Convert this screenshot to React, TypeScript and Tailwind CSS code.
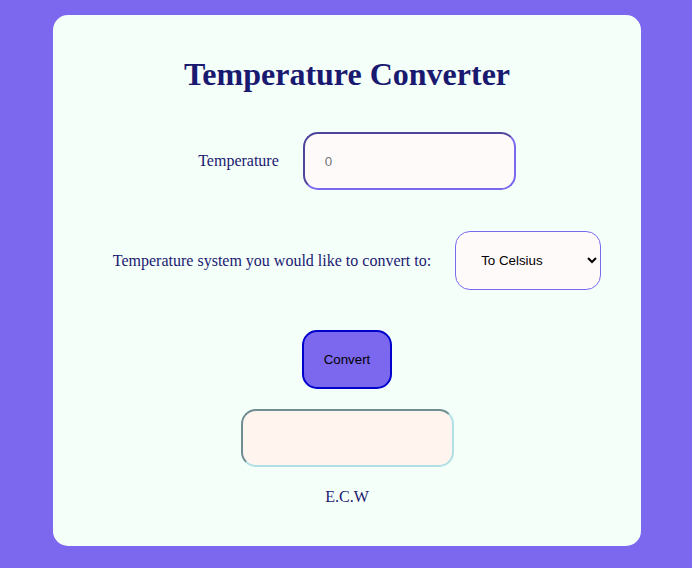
import React from "react";

export default function App() {
  return (
    <div className="min-h-[568px] w-full bg-[#7B68EE] pt-[15px] pb-[22px]">
      <div className="ml-[53px] flex h-[531px] w-[588px] flex-col items-center rounded-[15px] bg-[#F5FFFA] pt-[41px] text-[#191970] [font-family:'Liberation_Serif',serif]">
        <h1 className="text-[32px] font-bold leading-[37px]">Temperature Converter</h1>

        <div className="mt-[39px] flex items-center gap-[24px] pl-[20px]">
          <label className="text-[16px] leading-[18px]">Temperature</label>
          <input
            type="text"
            placeholder="0"
            className="h-[58px] w-[213px] rounded-[15px] border-2 border-[#7B68EE] [border-style:inset] bg-[#FFFAFA] pl-[20px] text-[13.33px] text-black outline-none placeholder:text-[#757575] [font-family:'Liberation_Sans',Arial,sans-serif]"
          />
        </div>

        <div className="mt-[41px] flex items-center gap-[24px] pl-[20px]">
          <label className="text-[16px] leading-[18px]">Temperature system you would like to convert to:</label>
          <select className="h-[59px] w-[146px] rounded-[15px] border border-[#7B68EE] bg-[#FFFAFA] pl-[21px] pr-[2px] text-[13.33px] text-black outline-none [font-family:'Liberation_Sans',Arial,sans-serif]">
            <option>To Celsius</option>
            <option>To Fahrenheit</option>
          </select>
        </div>

        <button className="mt-[40px] h-[59px] w-[90px] rounded-[15px] border-2 border-[#0000CD] bg-[#7B68EE] text-[13.33px] text-black [font-family:'Liberation_Sans',Arial,sans-serif]">
          Convert
        </button>

        <div className="mt-[20px] h-[58px] w-[213px] rounded-[15px] border-2 border-[#B0E0E6] [border-style:inset] bg-[#FFF5EE]"></div>

        <p className="mt-[21px] text-[16px] leading-[18px]">E.C.W</p>
      </div>
    </div>
  );
}
